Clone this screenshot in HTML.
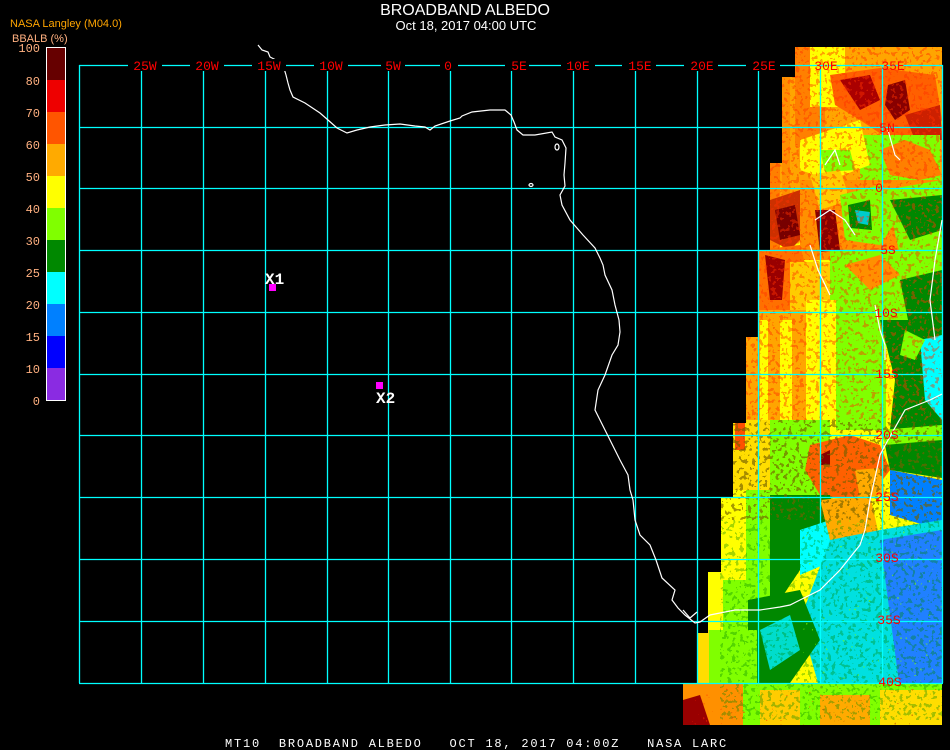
<!DOCTYPE html>
<html><head><meta charset="utf-8"><style>
html,body{margin:0;padding:0;background:#000;width:950px;height:750px;overflow:hidden}
svg{display:block}
text{font-family:"Liberation Sans",sans-serif}
.m{font-family:"Liberation Mono",monospace}
</style></head><body>
<svg width="950" height="750" viewBox="0 0 950 750" xmlns="http://www.w3.org/2000/svg">
<defs>
<clipPath id="dc"><polygon points="795,47 942,47 942,725 683,725 683,683 697,683 697,633 708,633 708,572 721,572 721,498 733,498 733,423 746,423 746,337 758,337 758,250 770,250 770,163 782,163 782,77 795,77"/></clipPath>
<filter id="spk" x="0" y="0" width="100%" height="100%">
<feTurbulence type="turbulence" baseFrequency="0.35" numOctaves="1" seed="3" result="n"/>
<feComponentTransfer in="n" result="a"><feFuncA type="discrete" tableValues="0 0 1 1"/></feComponentTransfer>
<feComposite in="SourceGraphic" in2="a" operator="in"/>
</filter>
<filter id="spk2" x="0" y="0" width="100%" height="100%">
<feTurbulence type="fractalNoise" baseFrequency="0.25" numOctaves="2" seed="8" result="n"/>
<feComponentTransfer in="n" result="a"><feFuncA type="discrete" tableValues="0 0 0 1 1"/></feComponentTransfer>
<feComposite in="SourceGraphic" in2="a" operator="in"/>
</filter>
</defs>

<text x="465" y="15" fill="#fff" font-size="16" text-anchor="middle">BROADBAND ALBEDO</text>
<text x="466" y="30" fill="#fff" font-size="13" text-anchor="middle">Oct 18, 2017 04:00 UTC</text>
<text x="10" y="27" fill="#ffa500" font-size="11">NASA Langley (M04.0)</text>
<text x="12" y="42" fill="#ffb080" font-size="11">BBALB (%)</text>

<g>
<rect x="46" y="47" width="19" height="33" fill="#660000"/>
<rect x="46" y="80" width="19" height="32" fill="#ee0000"/>
<rect x="46" y="112" width="19" height="32" fill="#ff5500"/>
<rect x="46" y="144" width="19" height="32" fill="#ffaa00"/>
<rect x="46" y="176" width="19" height="32" fill="#ffff00"/>
<rect x="46" y="208" width="19" height="32" fill="#80ff00"/>
<rect x="46" y="240" width="19" height="32" fill="#008800"/>
<rect x="46" y="272" width="19" height="32" fill="#00ffff"/>
<rect x="46" y="304" width="19" height="32" fill="#0080ff"/>
<rect x="46" y="336" width="19" height="32" fill="#0000ff"/>
<rect x="46" y="368" width="19" height="32" fill="#8a2be2"/>
<rect x="46.5" y="47.5" width="19" height="353" fill="none" stroke="#fff" stroke-width="1"/>
</g>
<g fill="#ffb080" font-size="12" text-anchor="end">
<text x="40" y="52" class="m">100</text><text x="40" y="85" class="m">80</text><text x="40" y="117" class="m">70</text>
<text x="40" y="149" class="m">60</text><text x="40" y="181" class="m">50</text><text x="40" y="213" class="m">40</text>
<text x="40" y="245" class="m">30</text><text x="40" y="277" class="m">25</text><text x="40" y="309" class="m">20</text>
<text x="40" y="341" class="m">15</text><text x="40" y="373" class="m">10</text><text x="40" y="405" class="m">0</text>
</g>

<g clip-path="url(#dc)">
<rect x="680" y="40" width="270" height="700" fill="#ffff00"/>
<rect x="758" y="40" width="190" height="200" fill="#ffa500"/>
<rect x="795" y="47" width="30" height="100" fill="#ff8000"/>
<rect x="810" y="47" width="35" height="60" fill="#ffff00"/>
<path d="M830,75 L880,68 L935,75 L942,120 L925,145 L890,140 L860,120 L835,105Z" fill="#ff6000"/>
<path d="M840,80 L870,75 L880,100 L860,110Z" fill="#aa0000"/>
<path d="M888,85 L905,80 L910,110 L895,120 L885,105Z" fill="#880000"/>
<path d="M905,115 L940,105 L942,140 L915,140Z" fill="#cc2000"/>
<path d="M850,140 L875,135 L885,160 L860,170Z" fill="#dd2000"/>
<rect x="860" y="135" width="80" height="45" fill="#80ff00"/>
<path d="M880,150 L905,140 L930,150 L942,175 L920,180 L890,175Z" fill="#ff8000"/>
<path d="M800,140 L860,120 L870,165 L830,180 L800,170Z" fill="#ffff00"/>
<path d="M820,150 L850,150 L855,170 L825,172Z" fill="#80ff00"/>
<rect x="770" y="163" width="10" height="90" fill="#ff8000"/>
<rect x="782" y="77" width="8" height="170" fill="#ff9000"/>
<path d="M770,200 L800,190 L810,230 L790,250 L770,240Z" fill="#cc3000"/>
<path d="M775,210 L795,205 L800,235 L780,240Z" fill="#770000"/>
<rect x="800" y="180" width="142" height="80" fill="#ff9000"/>
<path d="M810,175 L840,170 L850,200 L820,210Z" fill="#ffcc00"/>
<path d="M840,195 L880,185 L900,215 L880,245 L845,240Z" fill="#80ff00"/>
<path d="M848,205 L870,200 L872,230 L850,228Z" fill="#008800"/>
<path d="M855,210 L870,212 L868,225 L858,223Z" fill="#00cccc"/>
<path d="M885,190 L942,180 L942,250 L900,255Z" fill="#80ff00"/>
<path d="M890,200 L942,195 L942,230 L910,240Z" fill="#008800"/>
<path d="M815,210 L835,210 L840,250 L820,252Z" fill="#880000"/>
<path d="M758,250 L800,245 L812,290 L790,310 L758,315Z" fill="#ff7000"/>
<path d="M765,255 L785,260 L782,300 L770,300Z" fill="#990000"/>
<rect x="790" y="262" width="40" height="50" fill="#ffcc00"/>
<path d="M830,250 L942,250 L942,320 L860,330 L830,300Z" fill="#80ff00"/>
<path d="M845,265 L880,255 L900,275 L870,290Z" fill="#ff9000"/>
<path d="M900,280 L942,270 L942,330 L910,330Z" fill="#008800"/>
<rect x="746" y="310" width="60" height="120" fill="#ffa500"/>
<rect x="760" y="320" width="8" height="110" fill="#ffff00"/>
<rect x="780" y="320" width="12" height="110" fill="#ffff00"/>
<rect x="806" y="300" width="30" height="130" fill="#ffff00"/>
<rect x="836" y="300" width="50" height="130" fill="#80ff00"/>
<path d="M880,320 L942,320 L942,430 L890,430 L895,380Z" fill="#008800"/>
<path d="M920,340 L942,335 L942,420 L925,400Z" fill="#00ffff"/>
<path d="M905,330 L925,340 L915,360 L900,355Z" fill="#80ff00"/>
<rect x="733" y="420" width="40" height="90" fill="#ffdd00"/>
<rect x="735" y="420" width="10" height="30" fill="#ff5000"/>
<rect x="770" y="420" width="60" height="80" fill="#80ff00"/>
<path d="M810,445 L850,435 L880,445 L890,470 L875,490 L850,500 L820,495 L805,470Z" fill="#ff6000"/>
<path d="M820,455 L830,450 L830,465 L820,465Z" fill="#880000"/>
<path d="M855,470 L880,468 L885,495 L860,498Z" fill="#ffaa00"/>
<path d="M880,430 L942,425 L942,470 L895,470Z" fill="#80ff00"/>
<path d="M890,470 L942,480 L942,530 L890,515Z" fill="#0080ff"/>
<path d="M885,445 L942,440 L942,478 L890,470Z" fill="#008800"/>
<rect x="721" y="490" width="25" height="90" fill="#ffff00"/>
<rect x="746" y="490" width="30" height="110" fill="#80ff00"/>
<path d="M770,495 L830,495 L840,530 L820,560 L800,570 L780,600 L770,600Z" fill="#008800"/>
<path d="M800,530 L830,520 L835,560 L800,575Z" fill="#00ffff"/>
<path d="M820,500 L870,495 L880,540 L850,560 L830,540Z" fill="#ffaa00"/>
<path d="M830,540 L880,530 L942,520 L942,690 L820,690 L800,620Z" fill="#00e0e0"/>
<path d="M880,540 L942,530 L942,690 L900,690Z" fill="#2080ff"/>
<rect x="708" y="570" width="15" height="70" fill="#ffff00"/>
<rect x="723" y="580" width="25" height="60" fill="#80ff00"/>
<path d="M748,600 L800,590 L820,640 L790,683 L748,683Z" fill="#008800"/>
<path d="M760,630 L790,615 L800,650 L770,670Z" fill="#00ddcc"/>
<rect x="697" y="630" width="60" height="55" fill="#80ff00"/>
<rect x="697" y="630" width="12" height="55" fill="#ffdd00"/>
<rect x="683" y="683" width="260" height="45" fill="#80ff00"/>
<rect x="683" y="683" width="60" height="45" fill="#ff9000"/>
<path d="M683,700 L700,695 L710,725 L683,725Z" fill="#990000"/>
<rect x="760" y="690" width="40" height="35" fill="#ffcc00"/>
<rect x="820" y="695" width="50" height="30" fill="#ffaa00"/>
<rect x="880" y="690" width="62" height="35" fill="#ffdd00"/>
<rect x="683" y="40" width="260" height="480" fill="#ff3000" opacity="0.45" filter="url(#spk2)"/>
<rect x="800" y="520" width="142" height="205" fill="#80ff00" opacity="0.6" filter="url(#spk)"/>
<rect x="720" y="420" width="222" height="300" fill="#008800" opacity="0.35" filter="url(#spk2)"/>
<rect x="683" y="683" width="260" height="45" fill="#ff2000" opacity="0.5" filter="url(#spk)"/>
</g>

<g stroke="#00ffff" stroke-width="1.3" fill="none">
<path d="M79.5,65V683M141.5,65V683M203.5,65V683M265.5,65V683M327.5,65V683M388.5,65V683M450.5,65V683M511.5,65V683M573.5,65V683M635.5,65V683M697.5,65V683M758.5,65V683M820.5,65V683M882.5,65V683M942.5,65V683"/>
<path d="M79,65.5H943M79,127.5H943M79,188.5H943M79,250.5H943M79,312.5H943M79,374.5H943M79,435.5H943M79,497.5H943M79,559.5H943M79,621.5H943M79,683.5H943"/>
</g>

<g stroke="#fff" stroke-width="1.2" fill="none">
<polyline points="258,45 262,50 268,52 270,57 276,60 283,65 286,75 288,83 290,90 293,97 305,103 320,113 328,120 337,128 347,133 357,130 370,127 385,125 400,124 415,126 425,127 430,130 435,126 450,121 460,118 462,116 472,112 490,110 505,110 511,115 514,122 517,130 523,135 535,135 552,132 555,137 562,140 566,148 565,163 564,175 565,186 560,195 562,205 570,220 583,235 595,248 600,258 603,265 605,275 612,290 615,305 619,320 620,332 618,345 612,355 605,375 598,390 595,410 600,420 610,440 620,460 628,475 630,490 633,500 635,520 640,535 650,545 656,560 662,578 675,590 672,600 678,608 685,615 695,623 700,622 710,615 720,613 735,610 760,610 780,607 790,605 800,600 820,590 840,570 860,545 865,530 870,500 880,455 888,440 905,410 930,400 942,394"/>
<polyline points="683,610 690,618 697,612"/>
<ellipse cx="557" cy="147" rx="2" ry="3"/>
<ellipse cx="531" cy="185" rx="2" ry="1.5"/>
<polyline points="825,165 835,150 840,165"/>
<polyline points="888,130 895,155 900,160"/>
<polyline points="815,220 830,210 845,220 855,235"/>
<polyline points="810,245 818,270 830,295"/>
<polyline points="875,305 880,330 885,345 885,360"/>
<polyline points="942,220 935,260 930,300 935,340"/>
</g>

<g font-size="13" fill="#ff0000">
<g fill="#000"><rect x="128" y="59" width="34" height="12"/><rect x="190" y="59" width="34" height="12"/><rect x="252" y="59" width="34" height="12"/><rect x="314" y="59" width="34" height="12"/><rect x="381" y="59" width="24" height="12"/><rect x="440" y="59" width="18" height="12"/><rect x="505" y="59" width="24" height="12"/><rect x="561" y="59" width="34" height="12"/><rect x="622" y="59" width="34" height="12"/><rect x="684" y="59" width="34" height="12"/><rect x="746" y="59" width="34" height="12"/></g>
<text x="145" y="70" text-anchor="middle" class="m">25W</text>
<text x="207" y="70" text-anchor="middle" class="m">20W</text>
<text x="269" y="70" text-anchor="middle" class="m">15W</text>
<text x="331" y="70" text-anchor="middle" class="m">10W</text>
<text x="393" y="70" text-anchor="middle" class="m">5W</text>
<text x="448" y="70" text-anchor="middle" class="m">0</text>
<text x="519" y="70" text-anchor="middle" class="m">5E</text>
<text x="578" y="70" text-anchor="middle" class="m">10E</text>
<text x="640" y="70" text-anchor="middle" class="m">15E</text>
<text x="702" y="70" text-anchor="middle" class="m">20E</text>
<text x="764" y="70" text-anchor="middle" class="m">25E</text>
<text x="826" y="70" text-anchor="middle" class="m">30E</text>
<text x="893" y="70" text-anchor="middle" class="m">35E</text>
<text x="887" y="132" text-anchor="middle" class="m">5N</text>
<text x="879" y="192" text-anchor="middle" class="m">0</text>
<text x="888" y="254" text-anchor="middle" class="m">5S</text>
<text x="886" y="317" text-anchor="middle" class="m">10S</text>
<text x="887" y="378" text-anchor="middle" class="m">15S</text>
<text x="887" y="439" text-anchor="middle" class="m">20S</text>
<text x="887" y="501" text-anchor="middle" class="m">25S</text>
<text x="887" y="562" text-anchor="middle" class="m">30S</text>
<text x="889" y="624" text-anchor="middle" class="m">35S</text>
<text x="890" y="686" text-anchor="middle" class="m">40S</text>
</g>

<rect x="269" y="284" width="7" height="7" fill="#ff00ff"/>
<text x="265" y="284" fill="#fff" font-size="16" font-weight="bold" class="m">X1</text>
<rect x="376" y="382" width="7" height="7" fill="#ff00ff"/>
<text x="376" y="403" fill="#fff" font-size="16" font-weight="bold" class="m">X2</text>

<text x="225" y="747" fill="#fff" font-size="12" class="m" letter-spacing="1.78" xml:space="preserve">MT10  BROADBAND ALBEDO   OCT 18, 2017 04:00Z   NASA LARC</text>
</svg>
</body></html>
